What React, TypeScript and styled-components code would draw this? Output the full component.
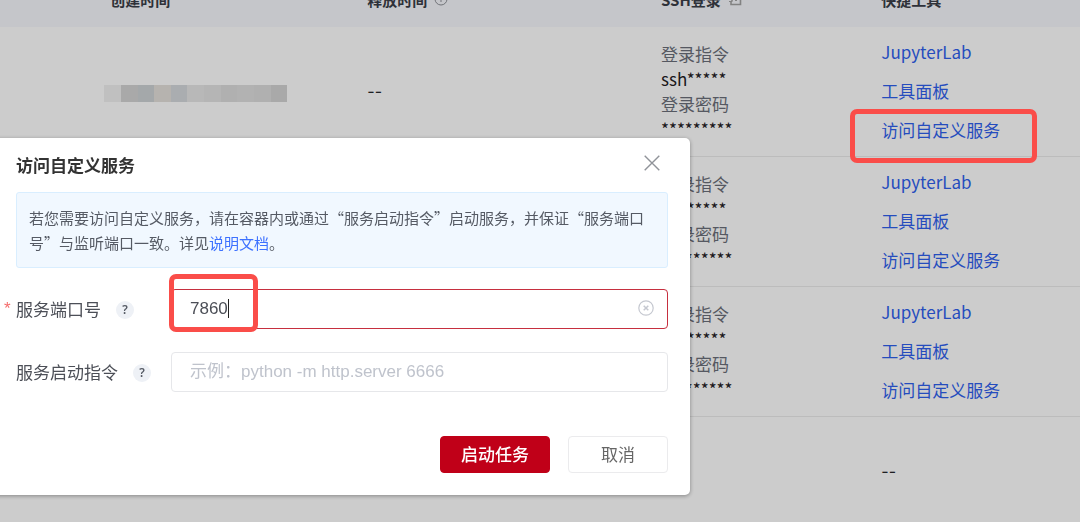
import React, { useState } from "react";
import styled, { createGlobalStyle } from "styled-components";

const GlobalStyle = createGlobalStyle`
  * { box-sizing: border-box; }
  body {
    margin: 0;
    background: #fff;
    color: #26282c;
    font: 17px/25px "Noto Sans CJK SC", "Noto Sans", sans-serif;
  }
  button, input { font: inherit; }
`;

const Page = styled.main`
  height: 100vh;
  overflow: hidden;
`;

const Table = styled.table`
  width: 100%;
  margin-top: -29px;
  table-layout: fixed;
  border-collapse: separate;
  border-spacing: 0;
`;

const Col = styled.col<{ $share?: string }>`
  width: ${(p) => p.$share ?? "auto"};
`;

const HeadCell = styled.th`
  height: 56px;
  padding: 0 12px;
  background: #f7f8fd;
  color: #3a3e48;
  font-size: 15px;
  font-weight: 700;
  text-align: left;
`;

const HeadLabel = styled.span`
  display: flex;
  align-items: center;
  gap: 7px;
`;

const Row = styled.tr<{ $short?: boolean }>`
  height: ${(p) => (p.$short ? 110 : 130)}px;
`;

const Cell = styled.td`
  padding: 0 12px 2px;
  border-bottom: 1px solid #ebebeb;
`;

const Dash = styled.span`
  font: 16px/25px Inter, sans-serif;
`;

const Login = styled.dl`
  margin: 0;
`;

const LoginTerm = styled.dt`
  color: #6b6f7a;
`;

const LoginValue = styled.dd`
  margin: 0;
  color: #1f2125;
`;

const Tools = styled.div`
  display: flex;
  flex-direction: column;
  align-items: flex-start;
  gap: 14px;
`;

const ToolLink = styled.a`
  position: relative;
  color: #2f5fee;
  text-decoration: none;
`;

const Mosaic = styled.div`
  display: flex;
  width: 183px;
  height: 17px;
  margin: 6px 0 0 -6px;
`;

const Tile = styled.span<{ $tone: string }>`
  flex: 1;
  background: ${(p) => p.$tone};
`;

const Mark = styled.span<{ $x: number; $y: number; $w: number; $h: number }>`
  position: absolute;
  z-index: 3;
  left: ${(p) => p.$x}px;
  top: ${(p) => p.$y}px;
  width: ${(p) => p.$w}px;
  height: ${(p) => p.$h}px;
  border: 5px solid #fa4d49;
  border-radius: 7px;
  pointer-events: none;
`;

const Overlay = styled.div`
  position: fixed;
  inset: 0;
  z-index: 2;
  padding-top: 138px;
  background: rgba(0, 0, 0, 0.2);
`;

const Dialog = styled.section`
  width: 65%;
  margin-left: -12px;
  padding: 10px 22px 22px 28px;
  border-radius: 5px;
  background: #fff;
  box-shadow: 0 1px 4px rgba(0, 0, 0, 0.35);
`;

const DialogHead = styled.header`
  display: flex;
  align-items: center;
  justify-content: space-between;
  height: 32px;
  margin-bottom: 12px;
`;

const Title = styled.h2`
  margin: 0;
  color: #333;
  font-size: 17px;
  font-weight: 700;
`;

const IconButton = styled.button`
  display: flex;
  padding: 0;
  border: 0;
  background: none;
  cursor: pointer;
`;

const CloseButton = styled(IconButton)`
  margin: 0 8px 2px 0;
`;

const Notice = styled.p`
  margin: 0 0 21px;
  padding: 12px;
  border: 1px solid #d9eeff;
  border-radius: 3px;
  background: #f1f8ff;
  color: #555a64;
  font-size: 15px;
`;

const NoticeLink = styled.a`
  color: #3d71ff;
  text-decoration: none;
`;

const Field = styled.div`
  display: flex;
  align-items: center;
  margin-bottom: 23px;
`;

const LabelBox = styled.div`
  position: relative;
  display: flex;
  flex: 0 0 155px;
  align-items: center;
  gap: 15px;
  padding-bottom: 2px;
  color: #4c4f57;
`;

const Required = styled.span`
  position: absolute;
  left: -12px;
  top: 0;
  color: #f56c6c;
  font: 17px/25px "Liberation Sans", sans-serif;
`;

const Help = styled.button`
  width: 18px;
  height: 18px;
  margin-top: 4px;
  padding: 0;
  border: 0;
  border-radius: 50%;
  background: #eef1f6;
  color: #555a64;
  font: 600 12px/18px "Noto Sans", sans-serif;
`;

const InputBox = styled.div`
  position: relative;
  flex: 1;
`;

const Input = styled.input<{ $active?: boolean }>`
  display: block;
  width: 100%;
  height: 40px;
  padding: 0 44px 0 18px;
  border: 1px solid ${(p) => (p.$active ? "#c62f3f" : "#e6e7ea")};
  border-radius: 4px;
  outline: 0;
  background: #fff;
  color: #4c4f57;
  caret-color: transparent;
  font: 17px/25px "Liberation Sans", "Noto Sans CJK SC", sans-serif;
  &::placeholder {
    color: #bfc3cc;
    opacity: 1;
  }
`;

const Caret = styled.span`
  position: absolute;
  left: 57px;
  top: 10px;
  width: 1px;
  height: 19px;
  background: #222;
`;

const ClearButton = styled(IconButton)`
  position: absolute;
  right: 14px;
  top: 11px;
`;

const Actions = styled.footer`
  display: flex;
  justify-content: flex-end;
  gap: 18px;
  margin-top: 44px;
`;

const Button = styled.button<{ $primary?: boolean }>`
  height: 37px;
  padding: 0 ${(p) => (p.$primary ? 20 : 32)}px 2px;
  border: 1px solid ${(p) => (p.$primary ? "#c00018" : "#ebebed")};
  border-radius: 4px;
  background: ${(p) => (p.$primary ? "#c00018" : "#fff")};
  color: ${(p) => (p.$primary ? "#fff" : "#666")};
  font-weight: ${(p) => (p.$primary ? 500 : 400)};
`;

const tiles = ["#f1f1f1", "#d4d4d4", "#ced2d5", "#e4e0db", "#d5d9dc", "#e6e6e6", "#e3e3e3", "#dcdcdc", "#dfdfdf", "#dcdcdc", "#d4d4d4"];

const InfoIcon = () => (
  <svg width="14" height="14" viewBox="0 0 14 14" fill="none" stroke="#8d9097" aria-hidden="true">
    <circle cx="7" cy="7" r="6" />
    <path d="M7 3v1M7 6v4" />
  </svg>
);

const CopyIcon = () => (
  <svg width="14" height="14" viewBox="0 0 14 14" fill="none" stroke="#a3a3a3" aria-hidden="true">
    <path d="M4 9V1.500H12.500V12.500H3V10" strokeWidth="1.600" />
    <path d="M1 9.500H4.500M7 8.500h2" />
  </svg>
);

const CloseIcon = () => (
  <svg width="16" height="16" viewBox="0 0 16 16" fill="none" stroke="#909399" strokeWidth="1.400" aria-hidden="true">
    <path d="M.7.7 15.300 15.300M15.300.7.7 15.300" />
  </svg>
);

const ClearIcon = () => (
  <svg width="16" height="16" viewBox="0 0 16 16" fill="none" stroke="#c5c8d0" strokeWidth="1.200" aria-hidden="true">
    <circle cx="8" cy="8" r="7.200" />
    <path d="m5.700 5.700 4.600 4.600M10.300 5.700l-4.600 4.600" strokeWidth="1.500" />
  </svg>
);

function LoginInfo() {
  return (
    <Login>
      <LoginTerm>登录指令</LoginTerm>
      <LoginValue>ssh*****</LoginValue>
      <LoginTerm>登录密码</LoginTerm>
      <LoginValue>*********</LoginValue>
    </Login>
  );
}

function ToolLinks({ marked }: { marked?: boolean }) {
  return (
    <Tools>
      <ToolLink href="#jupyter">JupyterLab</ToolLink>
      <ToolLink href="#panel">工具面板</ToolLink>
      <ToolLink href="#service">
        访问自定义服务
        {marked && <Mark $x={-31} $y={-8} $w={187} $h={54} />}
      </ToolLink>
    </Tools>
  );
}

export default function App() {
  const [port, setPort] = useState("7860");
  const [command, setCommand] = useState("");

  return (
    <Page>
      <GlobalStyle />
      <Table>
        <colgroup>
          <Col $share="9.1%" />
          <Col $share="23.8%" />
          <Col $share="27.2%" />
          <Col $share="20.4%" />
          <Col />
        </colgroup>
        <thead>
          <tr>
            <HeadCell />
            <HeadCell>创建时间</HeadCell>
            <HeadCell><HeadLabel>释放时间 <InfoIcon /></HeadLabel></HeadCell>
            <HeadCell><HeadLabel>SSH登录 <CopyIcon /></HeadLabel></HeadCell>
            <HeadCell>快捷工具</HeadCell>
          </tr>
        </thead>
        <tbody>
          <Row>
            <Cell />
            <Cell>
              <Mosaic>{tiles.map((tone, i) => <Tile key={i} $tone={tone} />)}</Mosaic>
            </Cell>
            <Cell><Dash>--</Dash></Cell>
            <Cell><LoginInfo /></Cell>
            <Cell><ToolLinks marked /></Cell>
          </Row>
          {[1, 2].map((n) => (
            <Row key={n}>
              <Cell /><Cell /><Cell />
              <Cell><LoginInfo /></Cell>
              <Cell><ToolLinks /></Cell>
            </Row>
          ))}
          <Row $short>
            <Cell /><Cell /><Cell /><Cell />
            <Cell><Dash>--</Dash></Cell>
          </Row>
        </tbody>
      </Table>

      <Overlay>
        <Dialog role="dialog" aria-modal="true" aria-labelledby="dialog-title">
          <DialogHead>
            <Title id="dialog-title">访问自定义服务</Title>
            <CloseButton type="button" aria-label="关闭"><CloseIcon /></CloseButton>
          </DialogHead>
          <Notice>
            若您需要访问自定义服务，请在容器内或通过“服务启动指令”启动服务，并保证“服务端口号”与监听端口一致。详见<NoticeLink href="#docs">说明文档</NoticeLink>。
          </Notice>
          <Field>
            <LabelBox>
              <Required>*</Required>
              <label htmlFor="port">服务端口号</label>
              <Help type="button">?</Help>
            </LabelBox>
            <InputBox>
              <Input id="port" $active value={port} onChange={(e) => setPort(e.target.value)} />
              <Caret />
              <ClearButton type="button" aria-label="清空" onClick={() => setPort("")}><ClearIcon /></ClearButton>
              <Mark $x={-2} $y={-15} $w={89} $h={58} />
            </InputBox>
          </Field>
          <Field>
            <LabelBox>
              <label htmlFor="command">服务启动指令</label>
              <Help type="button">?</Help>
            </LabelBox>
            <InputBox>
              <Input
                id="command"
                placeholder="示例：python -m http.server 6666"
                value={command}
                onChange={(e) => setCommand(e.target.value)}
              />
            </InputBox>
          </Field>
          <Actions>
            <Button type="button" $primary>启动任务</Button>
            <Button type="button">取消</Button>
          </Actions>
        </Dialog>
      </Overlay>
    </Page>
  );
}
